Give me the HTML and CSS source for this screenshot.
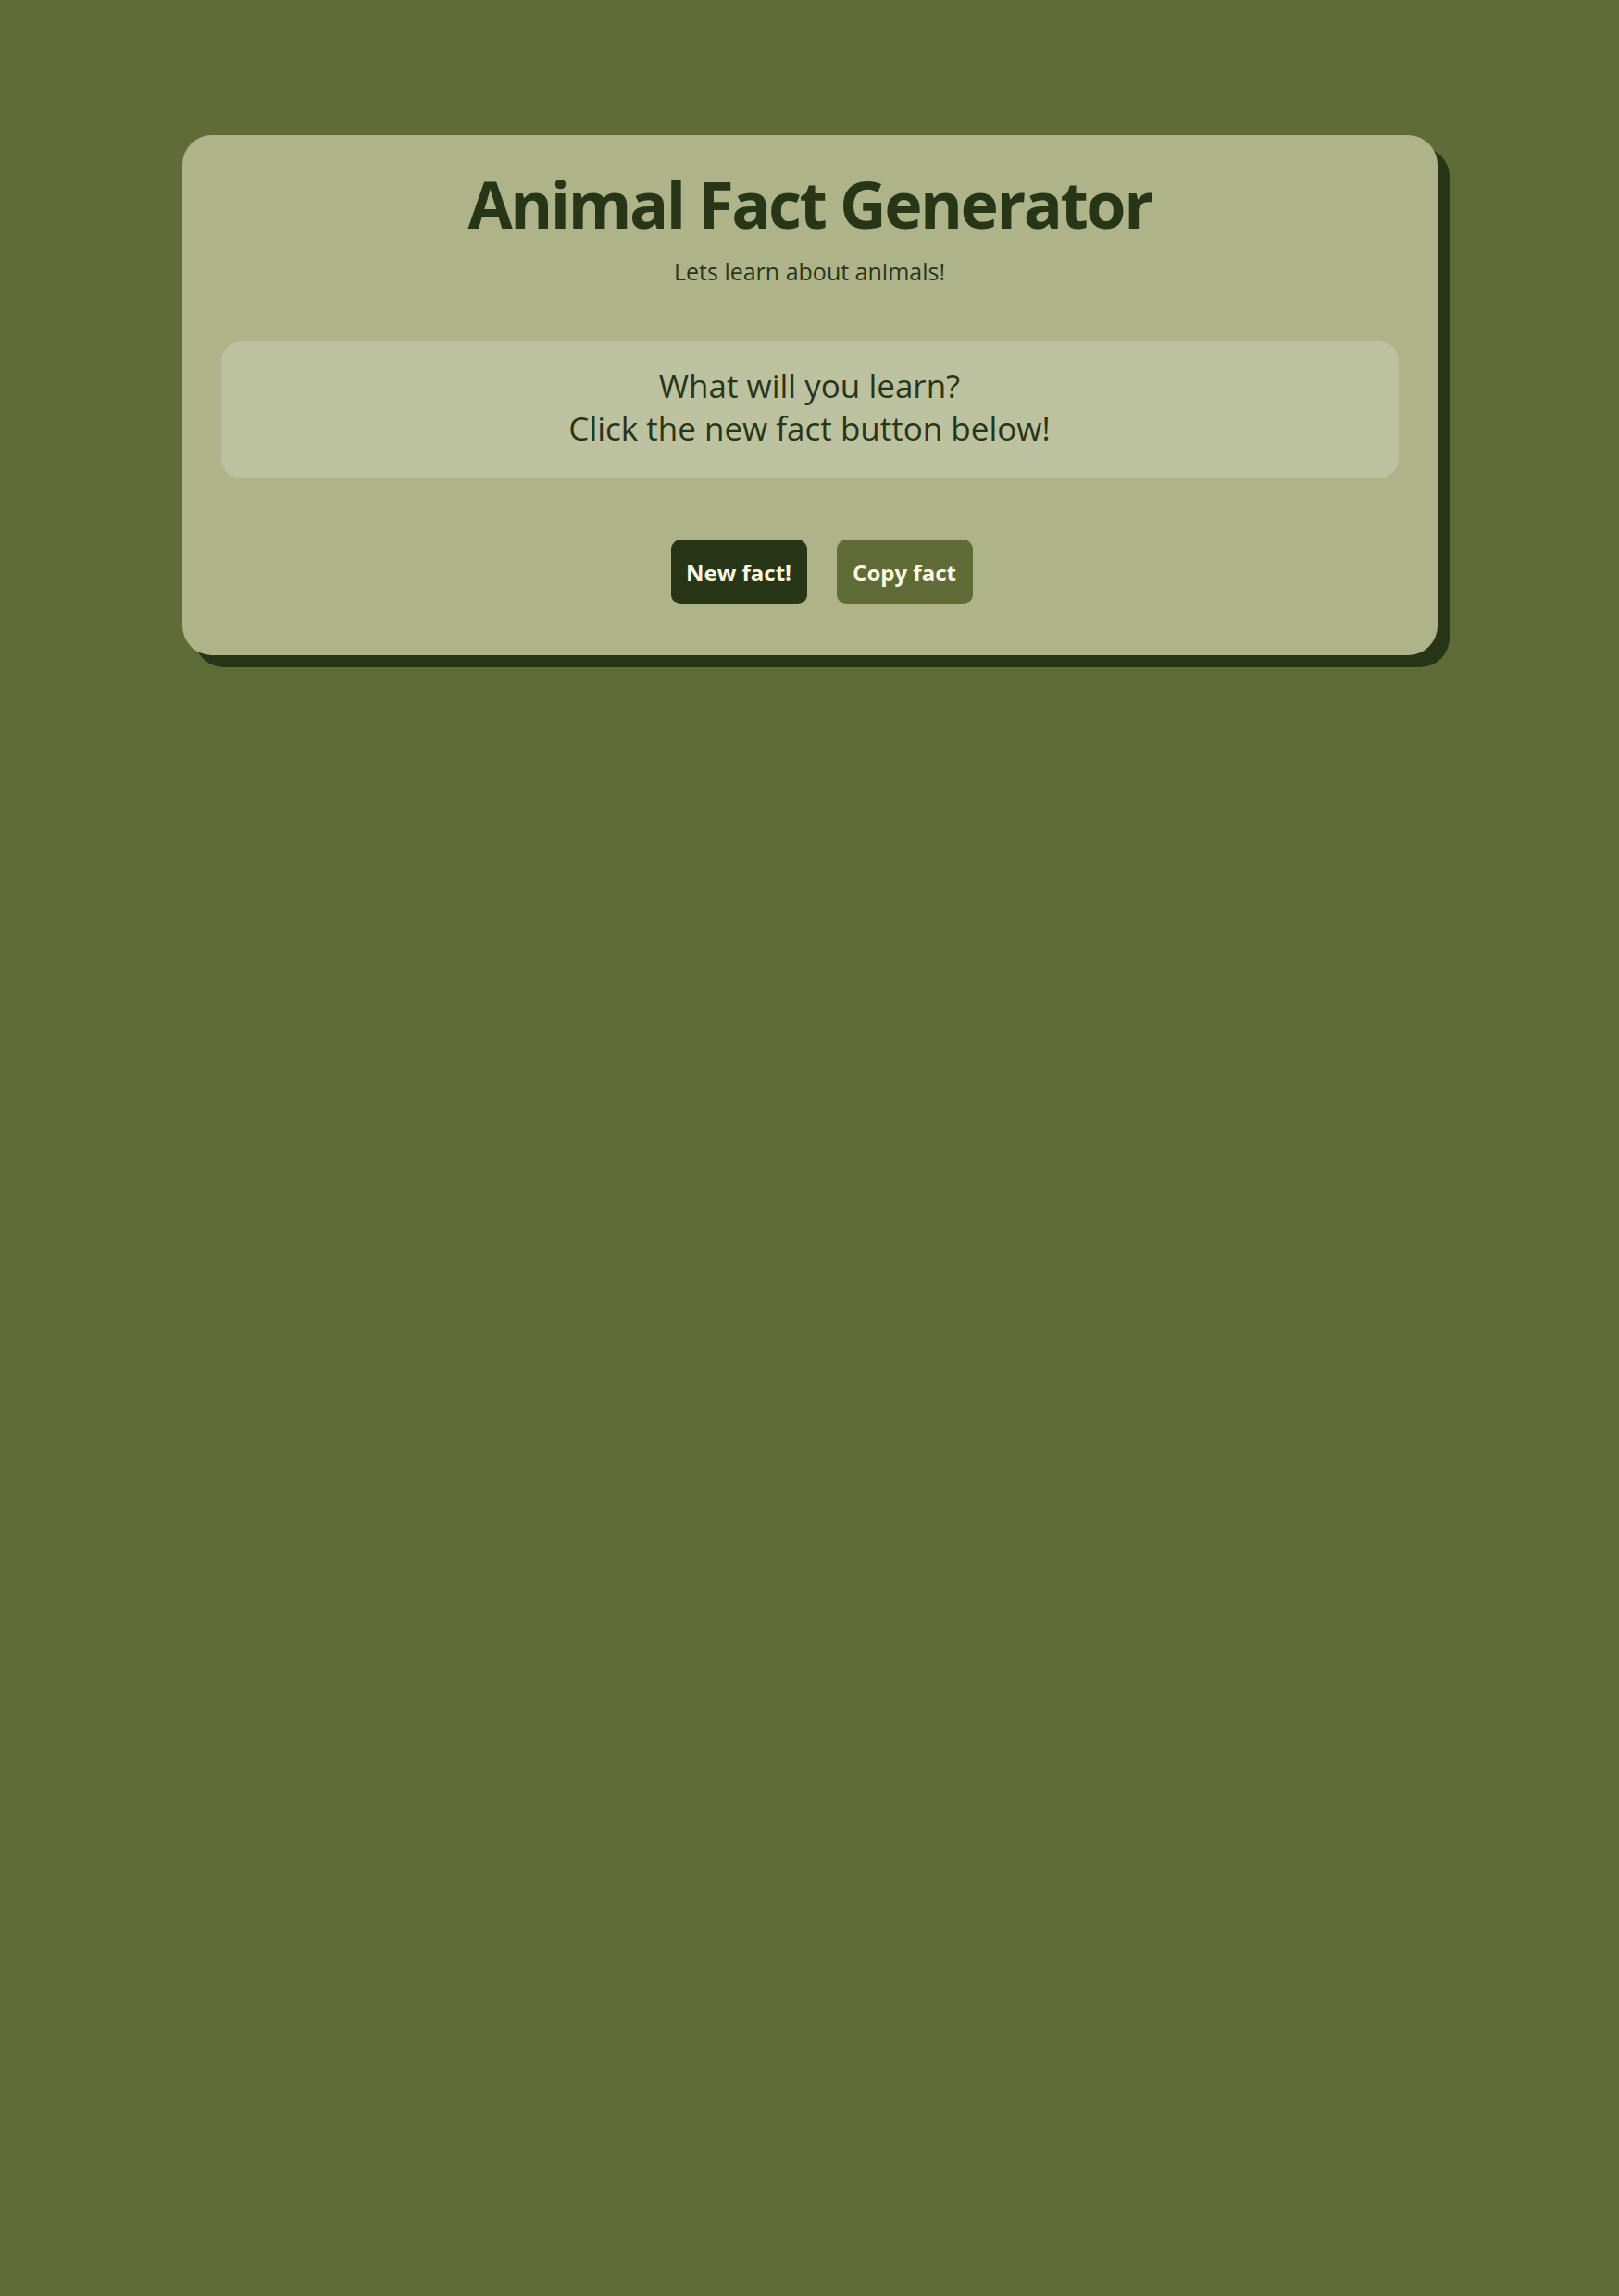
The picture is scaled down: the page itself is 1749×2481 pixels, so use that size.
FILE: index.html
```html
<!DOCTYPE html>
<html lang="en">
<head>
<meta charset="utf-8">
<title>Animal Fact Generator</title>
<link rel="stylesheet" href="styles.css">
</head>
<body>
  <main class="card">
    <header class="card-header">
      <h1 class="title">Animal Fact Generator</h1>
      <p class="subtitle">Lets learn about animals!</p>
    </header>
    <section class="fact-box">
      <p class="fact-text">What will you learn?<br>Click the new fact button below!</p>
    </section>
    <div class="actions">
      <button class="btn btn-new" type="button">New fact!</button>
      <button class="btn btn-copy" type="button">Copy fact</button>
    </div>
  </main>
</body>
</html>
```

FILE: styles.css
```css
* { box-sizing: border-box; }

html, body {
  margin: 0;
  padding: 0;
}

body {
  background: #606c38;
  min-height: 2481px;
  font-family: "Open Sans", "Lato", sans-serif;
  color: #283618;
  padding-top: 146px;
}

.card {
  width: 1356px;
  margin: 0 auto;
  background: #aeb38a;
  border-radius: 32px;
  box-shadow: 13px 13px 0 #283618;
  padding: 32px 42px 55px;
  display: flex;
  flex-direction: column;
  align-items: stretch;
}

.card-header {
  text-align: center;
}

.title {
  margin: 0;
  font-family: "Open Sans", sans-serif;
  font-weight: 700;
  font-size: 70px;
  line-height: 1.2;
  letter-spacing: -2.5px;
  color: #283618;
}

.subtitle {
  margin: 14px 0 0;
  font-size: 25px;
  color: #283618;
}

.fact-box {
  margin-top: 59px;
  background: #bcc2a0;
  border-radius: 22px;
  padding: 25px 20px 31px;
  text-align: center;
}

.fact-text {
  margin: 0;
  font-size: 35px;
  line-height: 46px;
  color: #283618;
}

.actions {
  margin-top: 66px;
  padding-left: 26px;
  display: flex;
  justify-content: center;
  gap: 32px;
}

.btn {
  border: none;
  border-radius: 11px;
  height: 70px;
  min-width: 147px;
  padding: 0 14px;
  font-family: "Open Sans", sans-serif;
  font-weight: 700;
  font-size: 24px;
  color: #fefae0;
  cursor: pointer;
}

.btn-new { background: #283618; }
.btn-copy { background: #606c38; }
```
